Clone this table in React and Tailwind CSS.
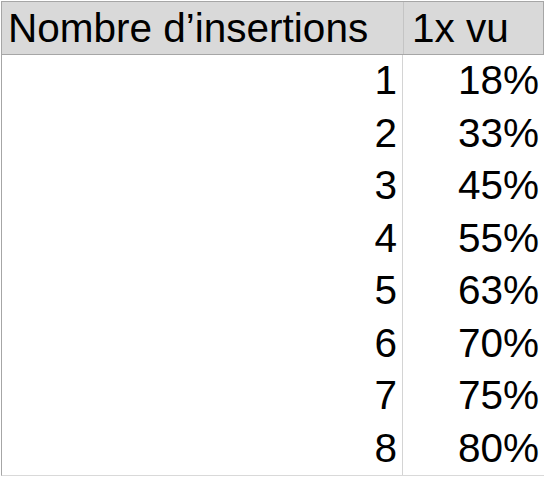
const rows = [
  [1, '18%'],
  [2, '33%'],
  [3, '45%'],
  [4, '55%'],
  [5, '63%'],
  [6, '70%'],
  [7, '75%'],
  [8, '80%'],
];

export default function App() {
  return (
    <div className="w-[545px] h-[477px] bg-white pt-px pl-px font-['Liberation_Sans',Arial,sans-serif]">
      <div className="w-[543px] text-[40.5px] text-black">
        <div className="grid grid-cols-[402px_141px] h-[54px] bg-[#d9d9d9] border-t border-l border-r border-b border-[#a6a6a6] leading-[52px]">
          <div className="pl-[6px] border-r border-[#c4c4c4] whitespace-nowrap">Nombre d’insertions</div>
          <div className="pl-[8px] whitespace-nowrap">1x vu</div>
        </div>
        <div className="border-l border-[#a6a6a6] border-b border-b-[#d9d9d9]">
          {rows.map(([n, pct]) => (
            <div key={n} className="grid grid-cols-[401px_141px] h-[52.5px] leading-[51px]">
              <div className="text-right pr-[5px] border-r border-[#d4d4d4]">{n}</div>
              <div className="text-right pr-[5px]">{pct}</div>
            </div>
          ))}
        </div>
      </div>
    </div>
  );
}
